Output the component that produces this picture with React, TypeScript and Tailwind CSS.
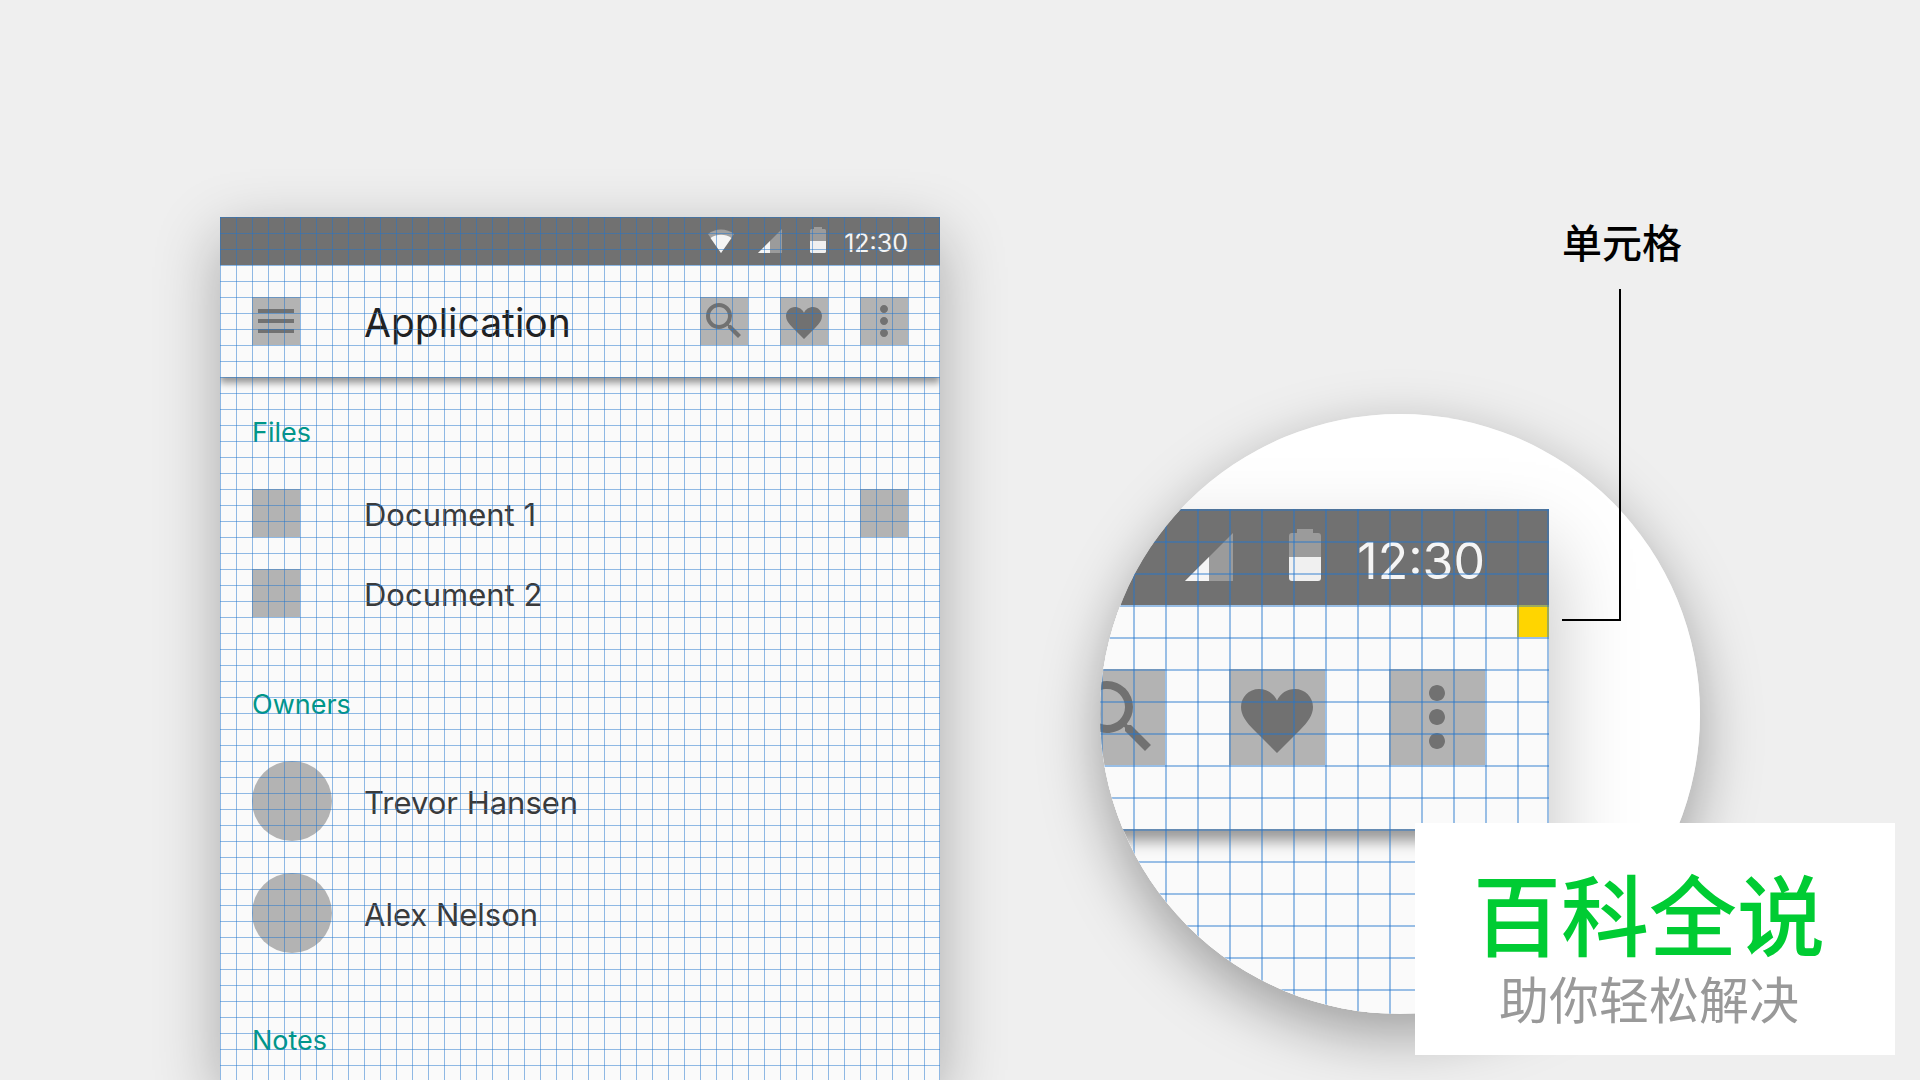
import React from 'react';
import { MdMenu, MdMoreVert, MdSearch } from 'react-icons/md';

const files = [
  { name: 'Document 1', hasAction: true },
  { name: 'Document 2', hasAction: false },
];

const owners = ['Trevor Hansen', 'Alex Nelson'];

type IconProps = { className?: string };

const HeartIcon = ({ className }: IconProps) => (
  <svg viewBox="0 0 48 48" fill="currentColor" className={className}>
    <path d="M24 42 L12.5 30.5 C8.5 26.5 6 23 6 19 C6 14 10 10 15 10 C19 10 22.3 12.2 24 15.8 C25.7 12.2 29 10 33 10 C38 10 42 14 42 19 C42 23 39.5 26.5 35.5 30.5 Z" />
  </svg>
);

const WifiIcon = ({ className }: IconProps) => (
  <svg viewBox="0 0 26 24" className={className}>
    <path d="M0 5 C7 -1 19 -1 26 5 L13 24 Z" fill="#a0a0a0" />
    <path d="M2.5 9 C8.5 4.8 17.5 4.8 23.5 9 L13 24 Z" fill="#f5f5f5" />
  </svg>
);

const SignalIcon = ({ className }: IconProps) => (
  <svg viewBox="0 0 24 24" className={className}>
    <path d="M0 24 L24 0 V24 Z" fill="#9b9b9b" />
    <path d="M0 24 L12 12 V24 Z" fill="#f5f5f5" />
  </svg>
);

const BatteryIcon = ({ className }: IconProps) => (
  <svg viewBox="0 0 16 26" className={className}>
    <path d="M4 0 H12 V2 H14.5 Q16 2 16 3.5 V14 H0 V3.5 Q0 2 1.5 2 H4 Z" fill="#9b9b9b" />
    <path d="M0 14 H16 V24.5 Q16 26 14.5 26 H1.5 Q0 26 0 24.5 Z" fill="#f0f0f0" />
  </svg>
);

const SectionTitle = ({ children }: { children: React.ReactNode }) => (
  <h2 className="text-[27px] leading-[48px] text-[#009688]">{children}</h2>
);

const PhoneScreen = () => (
  <article className="relative mt-[217px] ml-[220px] w-3/8 shrink-0 bg-[#fafafa] shadow-[0_20px_60px_rgba(0,0,0,0.3)]">
    <div className="flex h-12 items-end justify-end bg-[#717171] pr-8 pb-3">
      <WifiIcon className="mr-6 h-6 w-[26px]" />
      <SignalIcon className="mr-7 size-6" />
      <BatteryIcon className="mr-[18px] h-[26px] w-4" />
      <time className="text-[25px] leading-5 text-[#f5f5f5]">12:30</time>
    </div>

    <header className="relative flex h-28 items-center bg-[#fafafa] px-8 text-[#717171] shadow-[0_6px_7px_rgba(0,0,0,0.4)] [clip-path:inset(0_0_-20px_0)]">
      <button aria-label="Menu" className="size-12 bg-[#b3b3b3]">
        <MdMenu className="size-12" />
      </button>
      <h1 className="ml-16 flex-1 pt-1 text-[39px] text-[#212121]">Application</h1>
      <div className="flex gap-8">
        <button aria-label="Search" className="size-12 bg-[#b3b3b3]">
          <MdSearch className="size-12" />
        </button>
        <button aria-label="Favorite" className="size-12 bg-[#b3b3b3]">
          <HeartIcon className="size-12" />
        </button>
        <button aria-label="More" className="size-12 bg-[#b3b3b3]">
          <MdMoreVert className="size-12" />
        </button>
      </div>
    </header>

    <div className="space-y-16 px-8 pt-8 text-[#3a3a3a]">
      <section>
        <SectionTitle>Files</SectionTitle>
        <ul className="mt-8 space-y-8">
          {files.map((file) => (
            <li key={file.name} className="flex h-12 items-center">
              <span className="size-12 bg-[#b3b3b3]" />
              <span className="ml-16 flex-1 pt-1 text-[31px]">{file.name}</span>
              {file.hasAction && <button aria-label="Details" className="size-12 bg-[#b3b3b3]" />}
            </li>
          ))}
        </ul>
      </section>

      <section>
        <SectionTitle>Owners</SectionTitle>
        <ul className="mt-8 space-y-8">
          {owners.map((owner) => (
            <li key={owner} className="flex h-20 items-center gap-8">
              <span className="size-20 rounded-full bg-[#b3b3b3]" />
              <span className="pt-1 text-[31px]">{owner}</span>
            </li>
          ))}
        </ul>
      </section>

      <section>
        <SectionTitle>Notes</SectionTitle>
      </section>
    </div>

    {/* 8dp baseline grid */}
    <div className="pointer-events-none absolute inset-0 border-r border-[#2376cd]/50 bg-[linear-gradient(to_right,rgba(35,118,205,0.5)_1px,transparent_1px),linear-gradient(to_bottom,rgba(35,118,205,0.5)_1px,transparent_1px)] bg-[size:16px_16px]" />
  </article>
);

// Same screen at 2x, only its top right corner
const Lens = () => (
  <div className="mt-[146px] rounded-full shadow-[0_20px_60px_rgba(0,0,0,0.35)]">
    <div className="flex size-[600px] overflow-hidden rounded-full bg-white pt-[95px]">
      <div className="relative w-[449px] bg-[#fafafa] shadow-[0_40px_80px_rgba(0,0,0,0.25)]">
        <div className="flex h-24 items-end justify-end bg-[#717171] pr-16 pb-6">
          <SignalIcon className="mr-14 size-12" />
          <BatteryIcon className="mr-9 h-[52px] w-8" />
          <time className="text-[50px] leading-10 text-[#f5f5f5]">12:30</time>
        </div>

        <div className="relative flex h-56 items-center justify-end gap-16 bg-[#fafafa] pr-16 text-[#717171] shadow-[0_12px_14px_rgba(0,0,0,0.4)] [clip-path:inset(0_0_-40px_0)]">
          <MdSearch className="size-24 shrink-0 bg-[#b3b3b3]" />
          <HeartIcon className="size-24 shrink-0 bg-[#b3b3b3]" />
          <MdMoreVert className="size-24 shrink-0 bg-[#b3b3b3]" />
          <span className="absolute top-0 right-0 size-8 bg-[#ffd500]" />
        </div>

        <div className="pointer-events-none absolute inset-0 border-r-2 border-[#2376cd]/45 bg-[linear-gradient(to_right,rgba(35,118,205,0.45)_2px,transparent_2px),linear-gradient(to_bottom,rgba(35,118,205,0.45)_2px,transparent_2px)] bg-[size:32px_32px] bg-origin-border bg-right-top" />
      </div>
    </div>
  </div>
);

const App = () => {
  return (
    <main className="relative flex min-h-screen overflow-hidden bg-[#efefef] font-['Inter','Noto_Sans_CJK_SC',sans-serif]">
      <PhoneScreen />

      <figure className="relative ml-40 w-[600px] shrink-0 pt-[220px]">
        <figcaption className="pl-[462px] text-[40px] leading-[48px] font-medium whitespace-nowrap text-black">
          单元格
        </figcaption>
        <Lens />
        <div className="absolute top-[289px] left-[462px] h-[332px] w-[59px] border-r-2 border-b-2 border-black" />
      </figure>

      <aside className="absolute right-[25px] bottom-[25px] flex h-[232px] w-[480px] flex-col items-center justify-center bg-white pt-7 pr-3">
        <p className="text-[88px] leading-[96px] font-medium text-[#00cc33]">百科全说</p>
        <p className="text-[50px] leading-[72px] text-[#999999]">助你轻松解决</p>
      </aside>
    </main>
  );
};

export default App;
